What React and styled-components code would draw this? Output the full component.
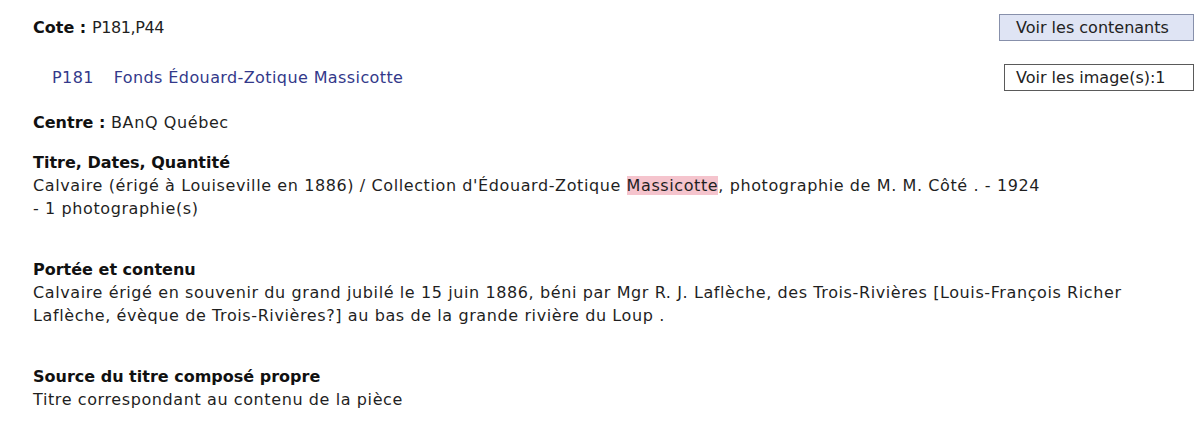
import React from 'react';
import styled, { createGlobalStyle } from 'styled-components';

const GlobalStyle = createGlobalStyle`
  body {
    margin: 0;
    background: #ffffff;
    font-family: 'DejaVu Sans', 'Open Sans', sans-serif;
    color: #1f1f1f;
  }
`

const Page = styled.div`
  width: 1202px;
  height: 433px;
  box-sizing: border-box;
  padding: 14px 8px 0 33px;
  font-size: 16px;
  line-height: 23px;
  letter-spacing: 0.6px;
`

const Row = styled.div`
  display: flex;
  justify-content: space-between;
  align-items: center;
  padding-left: ${p => p.indent || 0}px;
  margin-top: ${p => p.top || 0}px;
`

const Field = styled.div`
  margin-top: ${p => p.top || 0}px;
`

const Label = styled.span`
  font-weight: 700;
  letter-spacing: 0;
  color: #111;
`

const Code = styled.span`
  letter-spacing: -0.4px;
`

const FondsLink = styled.div`
  display: flex;
  gap: 20px;
  color: #33398a;
  letter-spacing: 0.4px;
`

const Button = styled.button`
  font-family: inherit;
  font-size: 16px;
  letter-spacing: 0;
  color: #222;
  height: 27px;
  padding: 0 0 0 ${p => p.pad}px;
  text-align: left;
  width: ${p => p.w}px;
  border: 1px solid ${p => (p.filled ? '#8790ab' : '#5a5a5a')};
  background: ${p => (p.filled ? '#dfe4f4' : '#ffffff')};
  cursor: pointer;
`

const Mark = styled.span`
  background: #f5c4cd;
`

const Section = styled.div`
  margin-top: ${p => p.top || 0}px;
`

const Heading = styled.div`
  font-weight: 700;
  letter-spacing: 0;
  color: #111;
`

const Body = styled.div`
  color: #1f1f1f;
`

export default function App() {
  return (
    <>
      <GlobalStyle />
      <Page>
        <Row>
          <div><Label>Cote :</Label> <Code>P181,P44</Code></div>
          <Button filled w={195} pad={16}>Voir les contenants</Button>
        </Row>
        <Row indent={19} top={23}>
          <FondsLink>
            <span>P181</span>
            <span>Fonds Édouard-Zotique Massicotte</span>
          </FondsLink>
          <Button w={190} pad={11}>Voir les image(s):1</Button>
        </Row>
        <Field top={20}>
          <Label>Centre :</Label> BAnQ Québec
        </Field>
        <Section top={17}>
          <Heading>Titre, Dates, Quantité</Heading>
          <Body>
            Calvaire (érigé à Louiseville en 1886) / Collection d'Édouard-Zotique <Mark>Massicotte</Mark>, photographie de M. M. Côté . - 1924
            <br />- 1 photographie(s)
          </Body>
        </Section>
        <Section top={38}>
          <Heading>Portée et contenu</Heading>
          <Body>
            Calvaire érigé en souvenir du grand jubilé le 15 juin 1886, béni par Mgr R. J. Laflèche, des Trois-Rivières [Louis-François Richer Laflèche, évèque de Trois-Rivières?] au bas de la grande rivière du Loup .
          </Body>
        </Section>
        <Section top={38}>
          <Heading>Source du titre composé propre</Heading>
          <Body>Titre correspondant au contenu de la pièce</Body>
        </Section>
      </Page>
    </>
  );
}
